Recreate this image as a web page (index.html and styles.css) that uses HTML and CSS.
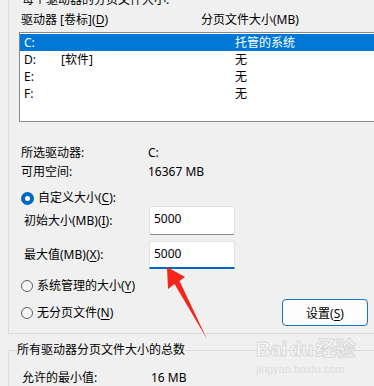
FILE: index.html
```html
<!DOCTYPE html>
<html lang="zh-CN">
<head>
<meta charset="utf-8">
<title>虚拟内存</title>
<link rel="stylesheet" href="styles.css">
</head>
<body>
<div class="page">
  <div class="group">
    <div class="title">每个驱动器的分页文件大小:</div>
    <div class="head">
      <span class="hcol1">驱动器 [卷标](<u>D</u>)</span>
      <span>分页文件大小(MB)</span>
    </div>
    <div class="listbox">
      <div class="row selected"><span class="c1">C:</span><span class="c2"></span><span>托管的系统</span></div>
      <div class="row"><span class="c1">D:</span><span class="c2">[软件]</span><span>无</span></div>
      <div class="row"><span class="c1">E:</span><span class="c2"></span><span>无</span></div>
      <div class="row"><span class="c1">F:</span><span class="c2"></span><span>无</span></div>
    </div>
    <div class="info">
      <div class="irow"><span class="ilabel">所选驱动器:</span><span>C:</span></div>
      <div class="irow"><span class="ilabel">可用空间:</span><span>16367 MB</span></div>
    </div>
    <div class="options">
      <div class="radio-row first"><span class="radio checked"></span><span>自定义大小(<u>C</u>):</span></div>
      <div class="field-row"><span class="flabel">初始大小(MB)(<u>I</u>):</span><div class="input">5000</div></div>
      <div class="field-row second"><span class="flabel">最大值(MB)(<u>X</u>):</span><div class="input focused">5000</div></div>
      <div class="radio-row third"><span class="radio"></span><span>系统管理的大小(<u>Y</u>)</span></div>
      <div class="last-row">
        <div class="radio-row"><span class="radio"></span><span>无分页文件(<u>N</u>)</span></div>
        <button class="btn">设置(<u>S</u>)</button>
      </div>
    </div>
  </div>
  <fieldset class="total">
    <legend>所有驱动器分页文件大小的总数</legend>
    <div class="trow"><span class="tlabel">允许的最小值:</span><span>16 MB</span></div>
  </fieldset>

  <svg class="arrow" width="52" height="80" viewBox="0 0 52 80">
    <polygon points="7,5 25,15 19.5,19 47,77 14.5,22 8,27" fill="#f5251a"/>
  </svg>

  <div class="watermark">
    <div class="wm1"><span>Bai</span><span class="paw">du</span><span>经验</span></div>
    <div class="wm2">jingyan.baidu.com</div>
  </div>
</div>
</body>
</html>
```

FILE: styles.css
```css
body {
  margin: 0;
  background: #f0f0f0;
  font-family: "Noto Sans", "Noto Sans CJK SC", sans-serif;
  font-size: 12px;
  line-height: 16px;
  color: #000;
}
u { text-decoration: underline; text-underline-offset: 2px; }

.page {
  width: 374px;
  height: 386px;
  overflow: hidden;
  position: relative;
}

.group {
  margin: -14px 0 0 8px;
  width: 440px;
  border: 1px solid #dcdcdc;
  padding: 5px 0 7px 0;
}
.title { padding-left: 13px; line-height: 16px; }
.head {
  display: flex;
  margin-top: 4px;
  padding-left: 12px;
  line-height: 16px;
}
.hcol1 { width: 180px; }

.listbox {
  margin: 4px 0 0 10px;
  width: 420px;
  height: 87px;
  border: 1px solid #858990;
  background: #fff;
  padding-top: 1px;
  box-sizing: content-box;
}
.row {
  display: flex;
  height: 17px;
  line-height: 17px;
}
.row .c1 { width: 37px; padding-left: 4px; }
.row .c2 { width: 174px; }
.row.selected { background: #0078d7; color: #fff; }

.info { margin-top: 21px; padding-left: 12px; }
.irow { display: flex; line-height: 19px; }
.ilabel { width: 127px; }

.options { width: 359px; }
.radio-row {
  display: flex;
  align-items: center;
  gap: 4px;
  padding-left: 12px;
  height: 16px;
}
.radio-row.first { margin-top: 9px; }
.radio-row.third { margin-top: 9px; }
.radio {
  width: 12px;
  height: 12px;
  box-sizing: border-box;
  border: 1px solid #5d5d5d;
  border-radius: 50%;
  background: #f6f6f6;
}
.radio.checked {
  width: 13px;
  height: 13px;
  border: 4px solid #0067c0;
  background: #fff;
}

.field-row {
  display: flex;
  align-items: center;
  padding-left: 15px;
}
.field-row.second { margin-top: 6px; }
.flabel { width: 125px; }
.input {
  width: 86px;
  height: 29px;
  box-sizing: border-box;
  background: #fff;
  border: 1px solid #e2e2e2;
  border-bottom-color: #8b8b8b;
  border-radius: 3px;
  padding: 4px 0 0 4px;
  line-height: 16px;
}
.input.focused {
  height: 28px;
  border-bottom: 2px solid #0067c0;
  border-radius: 3px 3px 0 0;
}

.last-row {
  display: flex;
  align-items: center;
  justify-content: space-between;
  margin-top: 5px;
}
.btn {
  width: 86px;
  height: 27px;
  border: 1px solid #1a74c8;
  border-radius: 4px;
  background: #fdfdfd;
  font-family: inherit;
  font-size: 12px;
  color: #000;
  padding: 0;
}

.total {
  margin: 8px 0 0 8px;
  width: 440px;
  border: 1px solid #dcdcdc;
  padding: 12px 0 0 8px;
}
.total legend { padding: 0; line-height: 16px; }
.trow { display: flex; padding-left: 5px; line-height: 16px; }
.tlabel { width: 129px; }

.arrow {
  position: absolute;
  left: 160px;
  top: 262px;
}

.watermark {
  position: absolute;
  left: 256px;
  top: 337px;
  color: rgba(255, 255, 255, 0.7);
  font-family: "Liberation Sans", "Noto Sans CJK SC", sans-serif;
  pointer-events: none;
}
.wm1 {
  font-size: 20px;
  line-height: 24px;
  font-weight: bold;
  -webkit-text-stroke: 1px #d9d9d9;
  display: flex;
  gap: 2px;
}
.wm2 {
  font-size: 11px;
  line-height: 12px;
  color: #dedede;
  margin-top: 2px;
}
```
